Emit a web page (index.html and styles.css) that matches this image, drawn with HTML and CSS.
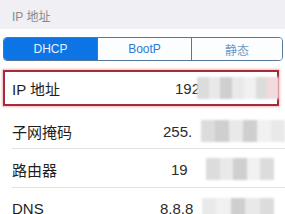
FILE: index.html
```html
<!DOCTYPE html>
<html lang="zh">
<head>
<meta charset="utf-8">
<link rel="stylesheet" href="styles.css">
</head>
<body>
<div class="header">IP 地址</div>
<div class="seg">
  <div class="seg-item active">DHCP</div>
  <div class="seg-item">BootP</div>
  <div class="seg-item muted">静态</div>
</div>
<div class="list">
  <div class="row row-first">
    <span class="label">IP 地址</span>
    <span class="value">192</span>
    <div class="mosaic m1"><i class="c2"></i><i class="c1"></i><i class="c3"></i><i class="c1"></i><i class="c4"></i><i class="c2"></i><i class="c5"></i></div>
  </div>
  <div class="row">
    <span class="label">子网掩码</span>
    <span class="value">255.</span>
    <div class="mosaic m2"><i class="c2"></i><i class="c3"></i><i class="c1"></i><i class="c3"></i><i class="c4"></i><i class="c1"></i></div>
  </div>
  <div class="row">
    <span class="label">路由器</span>
    <span class="value v3">19</span>
    <div class="mosaic m3"><i class="c2"></i><i class="c1"></i><i class="c3"></i><i class="c4"></i><i class="c2"></i></div>
  </div>
  <div class="row">
    <span class="label">DNS</span>
    <span class="value v4">8.8.8</span>
    <div class="mosaic m4"><i class="c1"></i><i class="c4"></i><i class="c3"></i><i class="c1"></i><i class="c2"></i></div>
  </div>
</div>
</body>
</html>
```
FILE: styles.css
```css
html, body {
  margin: 0;
  padding: 0;
  background: #fff;
}
body {
  width: 285px;
  height: 214px;
  overflow: hidden;
  font-family: "Liberation Sans", "Noto Sans CJK SC", sans-serif;
}
.header {
  height: 29px;
  box-sizing: border-box;
  padding: 10px 0 0 12px;
  background: #efeff4;
  color: #8a8a90;
  font-size: 12px;
  line-height: 14px;
}
.seg {
  margin: 8px 2px 0 3px;
  height: 24px;
  box-sizing: border-box;
  border: 1px solid #55789a;
  border-radius: 4px;
  display: grid;
  grid-template-columns: 93px 94px 1fr;
  overflow: hidden;
}
.seg-item {
  display: flex;
  align-items: center;
  justify-content: center;
  font-size: 12px;
  color: #2a7bd6;
  border-left: 1px solid #55789a;
  background: #fcfdff;
}
.seg-item.active {
  background: #0d74e6;
  color: #e8f2ff;
  border-left: 0;
}
.seg-item.muted {
  color: #6f97bf;
}
.list {
  margin-top: 9px;
}
.row {
  position: relative;
  height: 39px;
  box-sizing: border-box;
  display: grid;
  grid-template-columns: 151px 1fr;
  align-items: center;
  padding: 2px 0 0 0;
  margin-left: 12px;
  border-bottom: 1px solid #e2e2e6;
  font-size: 15px;
  color: #1e1e1e;
}
.row-first {
  height: 36px;
  width: 276px;
  margin: 0 0 6px 3px;
  padding: 0 0 0 7px;
  border: 2px solid #a52a3a;
  box-shadow: 0 0 2px 1px rgba(220, 120, 130, 0.5);
  grid-template-columns: 163px 1fr;
}
.row:nth-child(2) {
  height: 37px;
}
.label {
  white-space: nowrap;
}
.value {
  color: #2c2c2c;
}
.v3 { margin-left: 8px; }
.v4 { margin-left: -3px; }
.mosaic {
  position: absolute;
  display: flex;
  height: 22px;
  filter: blur(1.2px);
}
.mosaic i {
  display: block;
  flex: 1;
}
.mosaic .c1 { background: #e9e9e9; }
.mosaic .c2 { background: #dcdcdc; }
.mosaic .c3 { background: #cfcfcf; }
.mosaic .c4 { background: #f1f1f1; }
.mosaic .c5 { background: #f3dade; }
.m1 { left: 192px; top: 5px; width: 82px; }
.m2 { left: 189px; top: 8px; width: 84px; }
.m3 { left: 194px; top: 9px; width: 68px; }
.m4 { left: 190px; top: 10px; width: 72px; }
```
